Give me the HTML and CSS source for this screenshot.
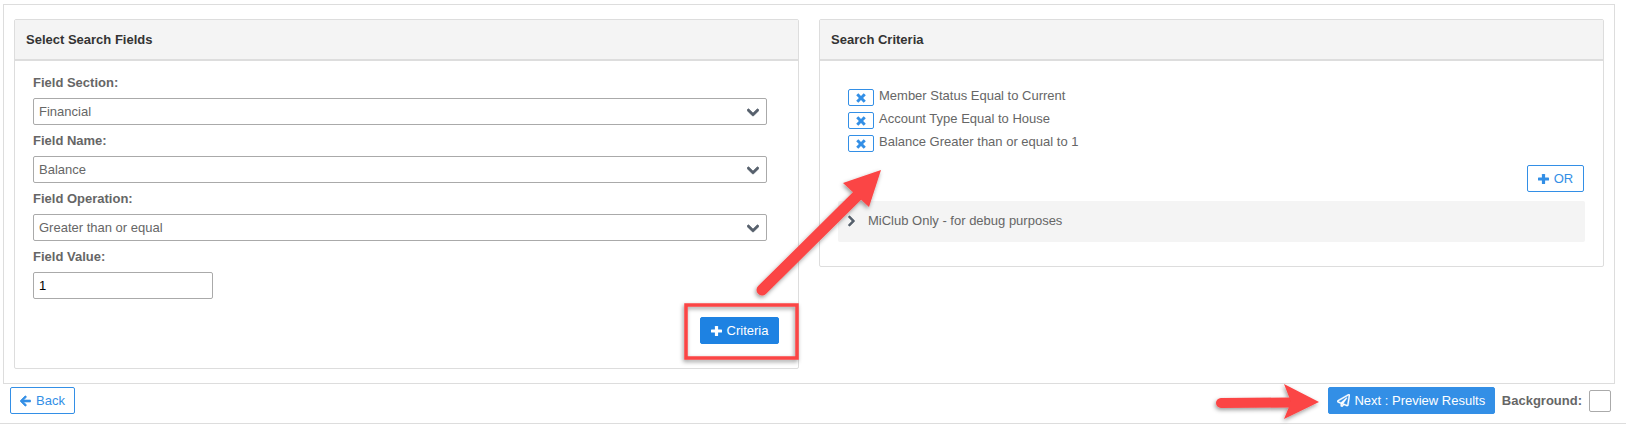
FILE: index.html
```html
<!DOCTYPE html>
<html lang="en">
<head>
<meta charset="utf-8">
<title>Search</title>
<link rel="stylesheet" href="styles.css">
</head>
<body>
<svg width="0" height="0" class="defs">
  <symbol id="i-plus" viewBox="0 0 11 10"><rect x="0" y="3.4" width="11" height="3.2" rx=".6"/><rect x="3.9" y="0" width="3.2" height="10" rx=".6"/></symbol>
  <symbol id="i-x" viewBox="0 0 10 10"><path d="M2.3 0.2 L5 2.9 L7.7 0.2 L9.8 2.3 L7.1 5 L9.8 7.7 L7.7 9.8 L5 7.1 L2.3 9.8 L0.2 7.7 L2.9 5 L0.2 2.3Z"/></symbol>
  <symbol id="i-left" viewBox="0 0 448 512"><path d="M257.5 445.1l-22.2 22.2c-9.4 9.4-24.6 9.4-33.9 0L7 273c-9.4-9.4-9.4-24.6 0-33.9L201.4 44.7c9.4-9.4 24.6-9.4 33.9 0l22.2 22.2c9.5 9.5 9.3 25-.4 34.3L136.6 216H424c13.3 0 24 10.7 24 24v32c0 13.3-10.7 24-24 24H136.6l120.5 114.8c9.8 9.3 10 24.8.4 34.3z"/></symbol>
  <symbol id="i-plane" viewBox="0 0 512 512"><path d="M440 6.5L24 246.4c-34.4 19.9-31.1 70.8 5.7 85.9L144 379.6V464c0 46.4 59.2 65.5 86.6 28.6l43.8-59.1 111.9 46.2c5.9 2.4 12.1 3.6 18.3 3.6 8.2 0 16.3-2.1 23.6-6.2 12.8-7.2 21.6-20 23.9-34.5l59.4-387.2c6.1-40.1-36.9-68.8-71.5-48.9zM192 464v-64.6l36.6 15.1L192 464zm212.6-28.7l-153.8-63.5L391 169.5c10.7-15.5-9.5-33.5-23.7-21.2L155.8 332.6 48 288 464 48l-59.4 387.3z"/></symbol>
  <symbol id="i-down" viewBox="0 0 448 512"><path d="M207.029 381.476L12.686 187.132c-9.373-9.373-9.373-24.569 0-33.941l22.667-22.667c9.357-9.357 24.522-9.375 33.901-.04L224 284.505l154.745-154.021c9.379-9.335 24.544-9.317 33.901.04l22.667 22.667c9.373 9.373 9.373 24.569 0 33.941L240.971 381.476c-9.373 9.372-24.569 9.372-33.942 0z"/></symbol>
  <symbol id="i-right" viewBox="0 0 320 512"><path d="M285.476 272.971L91.132 467.314c-9.373 9.373-24.569 9.373-33.941 0l-22.667-22.667c-9.357-9.357-9.375-24.522-.04-33.901L188.505 256 34.484 101.255c-9.335-9.379-9.317-24.544.04-33.901l22.667-22.667c9.373-9.373 24.569-9.373 33.941 0L285.476 239.03c9.373 9.372 9.373 24.568 0 33.941z"/></symbol>
</svg>

<main class="frame">
  <section class="panel panel-fields">
    <h2 class="panel-head">Select Search Fields</h2>
    <form class="panel-body fields">
      <label class="lbl" for="f1">Field Section:</label>
      <div class="select-wrap">
        <select id="f1" class="ctl"><option>Financial</option></select>
        <svg class="caret"><use href="#i-down"/></svg>
      </div>
      <label class="lbl" for="f2">Field Name:</label>
      <div class="select-wrap">
        <select id="f2" class="ctl"><option>Balance</option></select>
        <svg class="caret"><use href="#i-down"/></svg>
      </div>
      <label class="lbl" for="f3">Field Operation:</label>
      <div class="select-wrap">
        <select id="f3" class="ctl"><option>Greater than or equal</option></select>
        <svg class="caret"><use href="#i-down"/></svg>
      </div>
      <label class="lbl" for="f4">Field Value:</label>
      <input id="f4" class="ctl ctl-value" type="text" value="1">
      <div class="fields-actions">
        <button type="button" class="btn btn-solid btn-criteria"><svg class="ico"><use href="#i-plus"/></svg>Criteria</button>
      </div>
    </form>
  </section>

  <section class="panel panel-criteria">
    <h2 class="panel-head">Search Criteria</h2>
    <div class="panel-body criteria">
      <ul class="crit-list">
        <li class="crit"><button type="button" class="crit-x"><svg class="ico-x"><use href="#i-x"/></svg></button><span>Member Status Equal to Current</span></li>
        <li class="crit"><button type="button" class="crit-x"><svg class="ico-x"><use href="#i-x"/></svg></button><span>Account Type Equal to House</span></li>
        <li class="crit"><button type="button" class="crit-x"><svg class="ico-x"><use href="#i-x"/></svg></button><span>Balance Greater than or equal to 1</span></li>
      </ul>
      <div class="or-row">
        <button type="button" class="btn btn-line btn-or"><svg class="ico"><use href="#i-plus"/></svg>OR</button>
      </div>
      <div class="debug"><svg class="debug-chev"><use href="#i-right"/></svg><span>MiClub Only - for debug purposes</span></div>
    </div>
  </section>
</main>

<footer class="footer">
  <button type="button" class="btn btn-line btn-back"><svg class="ico ico-left"><use href="#i-left"/></svg>Back</button>
  <div class="footer-right">
    <button type="button" class="btn btn-next"><svg class="ico ico-plane"><use href="#i-plane"/></svg>Next : Preview Results</button>
    <span class="bg-label">Background:</span>
    <span class="bg-check"></span>
  </div>
</footer>

<svg class="marks" width="1626" height="430" viewBox="0 0 1626 430">
  <defs>
    <filter id="sh" x="-20%" y="-20%" width="140%" height="140%">
      <feDropShadow dx="-1" dy="2" stdDeviation="2" flood-color="#000" flood-opacity=".4"/>
    </filter>
  </defs>
  <g filter="url(#sh)">
    <rect x="686" y="305" width="111" height="53" fill="none" stroke="#fb4444" stroke-width="3.5"/>
    <path d="M762 290 L858 195" stroke="#fb4444" stroke-width="11" stroke-linecap="round" fill="none"/>
    <path d="M881 170 L843 183 L869 207 Z" fill="#fb4444"/>
    <path d="M1221 403 L1292 402.5" stroke="#fb4444" stroke-width="10" stroke-linecap="round" fill="none"/>
    <path d="M1319 402 L1284 384 L1291 402 L1284 419 Z" fill="#fb4444"/>
  </g>
</svg>
</body>
</html>
```
FILE: styles.css
```css
* { box-sizing: border-box; }
html, body { margin: 0; padding: 0; background: #fff; }
body {
  width: 1626px;
  height: 430px;
  position: relative;
  overflow: hidden;
  font-family: "Liberation Sans", Arial, sans-serif;
  font-size: 13px;
  color: #666;
}
.defs { position: absolute; }
.frame {
  display: flex;
  gap: 20px;
  margin: 4px 11px 0 3px;
  height: 380px;
  padding: 14px 10px;
  border: 1px solid #ddd;
}
.panel {
  border: 1px solid #ddd;
  border-radius: 2px;
  background: #fff;
  display: flex;
  flex-direction: column;
}
.panel-fields { width: 785px; height: 350px; }
.panel-criteria { width: 785px; height: 248px; }
.panel-head {
  margin: 0;
  height: 41px;
  padding: 0 11px 1px;
  display: flex;
  align-items: center;
  background: #f4f4f4;
  border-bottom: 2px solid #ddd;
  font-size: 13px;
  font-weight: 700;
  color: #333;
}
.fields { padding: 12px 31px 0 18px; display: flex; flex-direction: column; flex: 1; }
.lbl { font-weight: 700; line-height: 20px; height: 18px; margin-bottom: 7px; color: #666; }
.select-wrap { position: relative; height: 27px; margin-bottom: 6px; }
.ctl {
  appearance: none;
  display: block;
  width: 100%;
  height: 27px;
  padding: 0 5px;
  border: 1px solid #aaa;
  border-radius: 2px;
  background: #fff;
  font: 13px "Liberation Sans", Arial, sans-serif;
  color: #666;
}
.ctl-value { width: 180px; color: #000; }
.caret { position: absolute; right: 8px; top: 7px; width: 12px; height: 15px; fill: #555f6b; stroke: #555f6b; stroke-width: 36; }
.fields-actions { display: flex; justify-content: flex-end; margin: 18px -12px 0 0; }
.btn {
  display: inline-flex;
  align-items: center;
  justify-content: center;
  height: 27px;
  padding: 0;
  border-radius: 2px;
  font: 13px "Liberation Sans", Arial, sans-serif;
}
.ico { width: 11px; height: 10px; margin-right: 5px; fill: currentColor; flex: none; }
.ico-left { height: 12px; stroke: currentColor; stroke-width: 30; }
.ico-plane { width: 13px; height: 13px; margin-right: 4px; stroke: currentColor; stroke-width: 14; }
.btn-solid { background: #1e82e2; border: 1px solid #1e82e2; color: #fff; }
.btn-criteria { width: 79px; }
.btn-line { background: #fff; border: 1px solid #338fe6; color: #338fe6; }
.btn-or { width: 57px; }
.btn-back { width: 65px; }
.btn-next { width: 167px; background: #338fe6; border: 1px solid #338fe6; color: #fff; }
.criteria { padding: 28px 18px 0; }
.crit-list { list-style: none; margin: 0; padding: 0 0 0 10px; }
.crit { display: flex; align-items: flex-start; height: 23px; }
.crit span { line-height: 14px; }
.crit-x {
  width: 26px;
  height: 17px;
  margin: 0 5px 0 0;
  padding: 0;
  background: #fff;
  border: 1px solid #338fe6;
  border-radius: 2px;
  display: flex;
  align-items: center;
  justify-content: center;
}
.ico-x { width: 10px; height: 10px; fill: #338fe6; }
.or-row { display: flex; justify-content: flex-end; margin-top: 7px; padding-right: 1px; }
.debug {
  height: 41px;
  margin-top: 9px;
  display: flex;
  align-items: center;
  background: #f4f4f4;
  border-radius: 2px;
  padding: 0 0 1px 9px;
}
.debug span { margin-top: -2px; }
.debug-chev { width: 9px; height: 12px; margin-right: 12px; fill: #555f6b; stroke: #555f6b; stroke-width: 30; }
.footer {
  display: flex;
  justify-content: space-between;
  align-items: flex-start;
  height: 37px;
  margin-top: 3px;
  padding: 0 15px 0 10px;
  border-bottom: 1px solid #ddd;
}
.footer-right { display: flex; align-items: center; height: 27px; }
.bg-label { font-weight: 700; margin: 0 7px 0 7px; }
.bg-check { width: 22px; height: 22px; border: 1px solid #aaa; border-radius: 2px; background: #fff; }
.marks { position: absolute; left: 0; top: 0; pointer-events: none; }
```
